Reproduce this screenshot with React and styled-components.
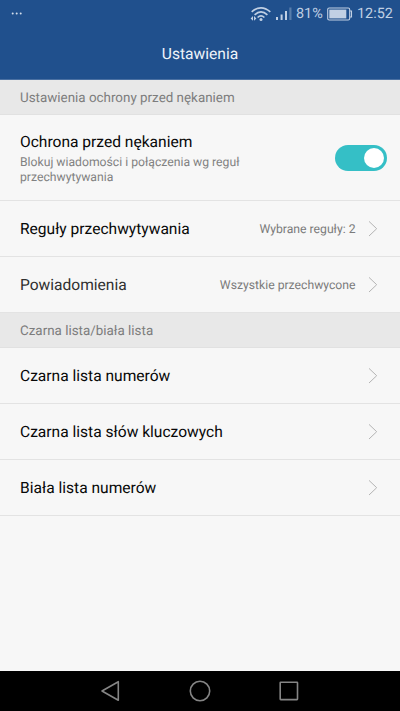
import styled, { createGlobalStyle } from "styled-components";

const GlobalStyle = createGlobalStyle`
  * { box-sizing: border-box; }

  body {
    margin: 0;
    background: #f7f7f7;
    font-family: Roboto, "Noto Sans", sans-serif;
    text-rendering: geometricPrecision;
  }
`;

const Screen = styled.div`
  display: flex;
  flex-direction: column;
  height: 711px;
  width: 400px;
  overflow: hidden;
  background: #f7f7f7;
`;

const Header = styled.header`
  height: 80px;
  flex: none;
  background: #20508d;
  border-bottom: 1px solid #4a70a2;
`;

const StatusBar = styled.div`
  display: flex;
  align-items: center;
  height: 28px;
  padding: 0 7px 0 11px;
  color: #c1d0e4;
  font-size: 14.4px;
  line-height: 28px;
`;

const StatusIcons = styled.div`
  display: flex;
  align-items: center;
  gap: 3px;
  margin-left: auto;

  svg { display: block; }
`;

const Percent = styled.span`
  width: 28px;
  white-space: nowrap;
`;

const Clock = styled.span`
  margin-left: 1px;
  width: 36px;
  white-space: nowrap;
`;

const Title = styled.h1`
  margin: 0;
  height: 51px;
  line-height: 52px;
  text-align: center;
  font-size: 15.6px;
  font-weight: 400;
  color: #eef3f9;
`;

const SectionTitle = styled.h2`
  margin: 0;
  flex: none;
  height: 35px;
  line-height: 37px;
  padding-left: 20px;
  background: #e8e8e8;
  border-bottom: 1px solid #e1e1e1;
  font-size: 13.4px;
  font-weight: 400;
  color: #7d7d7d;
`;

const Row = styled.div`
  display: flex;
  align-items: center;
  flex: none;
  height: ${({ $tall }) => ($tall ? 86 : 56)}px;
  padding: 0 ${({ $tall }) => ($tall ? 13 : 22)}px 0 20px;
  border-bottom: 1px solid #e3e3e3;
`;

const Label = styled.div`
  padding-top: 1px;
  font-size: 15.57px;
  line-height: 22px;
  color: ${({ $soft }) => ($soft ? "#303030" : "#080808")};
`;

const SwitchText = styled.div`
  ${Label} {
    padding-top: 0;
  }
`;

const Hint = styled.div`
  width: 240px;
  margin-top: 2px;
  font-size: 12.2px;
  line-height: 14.5px;
  color: #818181;
`;

const Value = styled.span`
  margin-left: auto;
  margin-right: 12.5px;
  font-size: 12.2px;
  color: #7b7b7b;
`;

const Arrow = styled.svg`
  display: block;
  width: 10px;
  height: 16px;
  margin-left: ${({ $alone }) => ($alone ? "auto" : 0)};
`;

const Switch = styled.div`
  display: flex;
  justify-content: flex-end;
  width: 52px;
  height: 26px;
  margin-left: auto;
  padding: 3px;
  border-radius: 13px;
  background: #35bfc6;
`;

const Knob = styled.div`
  width: 20px;
  height: 20px;
  border-radius: 50%;
  background: #fff;
`;

const NavBar = styled.nav`
  display: flex;
  justify-content: center;
  align-items: center;
  gap: 65px;
  flex: none;
  height: 40px;
  margin-top: auto;
  background: #000;
`;

const NavIcon = styled.svg`
  display: block;
  width: 24px;
  height: 24px;
  fill: none;
  stroke: #858585;
  stroke-width: 1.6;
`;

const Chevron = ({ alone }) => (
  <Arrow $alone={alone} viewBox="0 0 10 16" fill="none" stroke="#b4b4b4">
    <path d="M1 0.4 L8.7 7.7 L1 15" />
  </Arrow>
);

const LinkRow = ({ label, value, soft }) => (
  <Row>
    <Label $soft={soft}>{label}</Label>
    {value && <Value>{value}</Value>}
    <Chevron alone={!value} />
  </Row>
);

const Wifi = () => (
  <svg width="22" height="16" viewBox="0 0 22 16" fill="none" stroke="#c1d0e4" strokeWidth="1.7">
    <path d="M1.7 5.8 Q11 -2.2 20.3 5.8" />
    <path d="M4.6 8.8 Q11 3 17.4 8.8" />
    <path d="M7.6 11.5 Q11 8.3 14.4 11.5" />
    <circle cx="11" cy="13.5" r="1.5" fill="#c1d0e4" stroke="none" />
    <path d="M0.6 12.4 L3 10 V14.8 Z M6.4 12.4 L4 10 V14.8 Z" fill="#c1d0e4" stroke="none" />
  </svg>
);

const Signal = () => (
  <svg width="18" height="14" viewBox="0 0 18 14" fill="#c1d0e4">
    <rect x="1" y="10" width="2" height="3" />
    <rect x="5.6" y="7.5" width="2" height="5.5" />
    <rect x="10" y="4" width="2" height="9" />
    <rect x="14.3" y="0.5" width="2.2" height="12.5" opacity="0.35" />
  </svg>
);

const Battery = () => (
  <svg width="26" height="14" viewBox="0 0 26 14">
    <rect x="0.7" y="1" width="22" height="12" rx="1.5" fill="none" stroke="#c1d0e4" strokeWidth="1.1" />
    <rect x="2.3" y="2.6" width="17" height="8.8" fill="#c1d0e4" />
    <path d="M23 4 H24.5 V10 H23" fill="none" stroke="#c1d0e4" strokeWidth="1.1" />
  </svg>
);

export default function App() {
  return (
    <>
      <GlobalStyle />
      <Screen>
        <Header>
          <StatusBar>
            <svg width="12" height="4" viewBox="0 0 12 4" fill="#d3deec">
              <circle cx="1.7" cy="1.4" r="1" />
              <circle cx="5.7" cy="1.4" r="1" />
              <circle cx="9.7" cy="1.4" r="1" />
            </svg>
            <StatusIcons>
              <Wifi />
              <Signal />
              <Percent>81%</Percent>
              <Battery />
              <Clock>12:52</Clock>
            </StatusIcons>
          </StatusBar>
          <Title>Ustawienia</Title>
        </Header>

        <SectionTitle>Ustawienia ochrony przed nękaniem</SectionTitle>
        <Row $tall>
          <SwitchText>
            <Label>Ochrona przed nękaniem</Label>
            <Hint>Blokuj wiadomości i połączenia wg reguł przechwytywania</Hint>
          </SwitchText>
          <Switch role="switch" aria-checked="true">
            <Knob />
          </Switch>
        </Row>
        <LinkRow label="Reguły przechwytywania" value="Wybrane reguły: 2" />
        <LinkRow label="Powiadomienia" value="Wszystkie przechwycone" soft />

        <SectionTitle>Czarna lista/biała lista</SectionTitle>
        <LinkRow label="Czarna lista numerów" />
        <LinkRow label="Czarna lista słów kluczowych" />
        <LinkRow label="Biała lista numerów" />

        <NavBar>
          <NavIcon viewBox="0 0 24 24">
            <path d="M3 12 L19.3 2.7 V21.3 Z" strokeLinejoin="round" />
          </NavIcon>
          <NavIcon viewBox="0 0 24 24">
            <circle cx="12" cy="12" r="9.7" />
          </NavIcon>
          <NavIcon viewBox="0 0 24 24">
            <rect x="3.2" y="3.3" width="17.3" height="17.3" rx="0.5" />
          </NavIcon>
        </NavBar>
      </Screen>
    </>
  );
}
